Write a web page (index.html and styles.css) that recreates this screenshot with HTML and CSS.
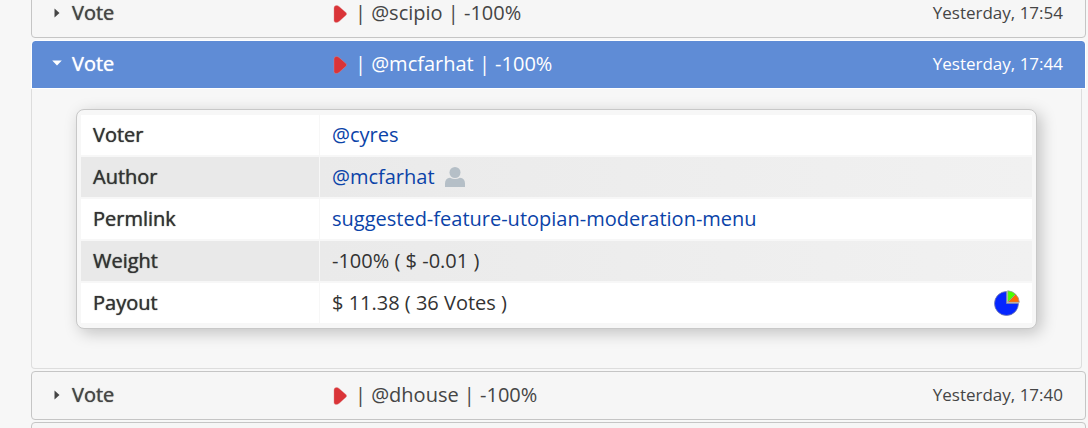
FILE: index.html
```html
<!DOCTYPE html>
<html lang="en">
<head>
<meta charset="utf-8">
<title>Votes</title>
<link rel="stylesheet" href="styles.css">
</head>
<body>
<svg class="defs" width="0" height="0" aria-hidden="true">
  <symbol id="flag" viewBox="0 0 14 18"><path d="M1 3Q1 .5 3.500 .5Q5 .5 6 1.400L13.200 7.800Q14 9 13.200 10L6 16.500Q4.500 17.500 3 17.500Q1 17.500 1 15.500Z" fill="#da3438" stroke="#e08a8c" stroke-width=".4"/></symbol>
  <symbol id="closed" viewBox="0 0 6 10"><path d="M.5.500 5.500 5 .5 9.500Z" fill="currentColor"/></symbol>
  <symbol id="open" viewBox="0 0 10 8"><path d="M.2.5H9.800L5 5.500Z" fill="currentColor"/></symbol>
</svg>
<main class="list">
  <button class="row" type="button" aria-expanded="false">
    <span class="marker"><svg width="6" height="10"><use href="#closed"/></svg></span>
    <span class="kind">Vote</span>
    <span class="summary"><svg class="flag" width="14" height="18"><use href="#flag"/></svg>| @scipio | -100%</span>
    <time class="time">Yesterday, 17:54</time>
  </button>
  <button class="row row-active" type="button" aria-expanded="true" aria-controls="details">
    <span class="marker"><svg width="10" height="8"><use href="#open"/></svg></span>
    <span class="kind">Vote</span>
    <span class="summary"><svg class="flag" width="14" height="18"><use href="#flag"/></svg>| @mcfarhat | -100%</span>
    <time class="time">Yesterday, 17:44</time>
  </button>
  <section class="panel" id="details">
    <div class="card">
      <table class="details">
        <tr><th scope="row">Voter</th><td><a href="#">@cyres</a></td></tr>
        <tr class="shade"><th scope="row">Author</th><td><div class="author"><a href="#">@mcfarhat</a><svg width="22" height="20" viewBox="0 0 22 20" aria-hidden="true"><ellipse cx="11" cy="5.500" rx="5.500" ry="5.500"/><path d="M1 20V16.500Q1 11.500 6 10.800Q11 13.200 16 10.800Q21 11.500 21 16.500V20Z"/></svg></div></td></tr>
        <tr><th scope="row">Permlink</th><td><a href="#">suggested-feature-utopian-moderation-menu</a></td></tr>
        <tr class="shade"><th scope="row">Weight</th><td>-100% ( $ -0.01 )</td></tr>
        <tr><th scope="row">Payout</th><td><div class="payout"><span>$ 11.38 ( 36 Votes )</span><svg width="26" height="26" viewBox="0 0 26 26" aria-hidden="true"><path d="M12.500 13.500V1.500A12 12 0 1 0 24.500 13.500Z" fill="#0526ff" stroke="#777fa8" stroke-width=".8"/><path d="M13.700 12.300V.8A12 12 0 0 1 21.700 4.300Z" fill="#4bff00" stroke="#999" stroke-width=".8"/><path d="M13.700 12.300 21.700 4.300A12 12 0 0 1 25.300 12.300Z" fill="#ff6a00" stroke="#999" stroke-width=".8"/></svg></div></td></tr>
      </table>
    </div>
  </section>
  <button class="row" type="button" aria-expanded="false">
    <span class="marker"><svg width="6" height="10"><use href="#closed"/></svg></span>
    <span class="kind">Vote</span>
    <span class="summary"><svg class="flag" width="14" height="18"><use href="#flag"/></svg>| @dhouse | -100%</span>
    <time class="time">Yesterday, 17:40</time>
  </button>
  <button class="row" type="button" aria-expanded="false" aria-label="Next vote"></button>
</main>
</body>
</html>
```
FILE: styles.css
```css
* { box-sizing: border-box; }
html { height: 100%; overflow: hidden; }
body {
  height: 100%;
  margin: 0;
  overflow: hidden;
  background: #f7f7f7;
  color: #333;
  font: 20px/28px "Open Sans", sans-serif;
}
.defs { position: absolute; }
.list {
  display: flex;
  flex-direction: column;
  gap: 2px;
  margin: -11px 2px 0 31px;
}
.row {
  display: flex;
  align-items: center;
  width: 100%;
  min-height: 49px;
  padding: 0 22px 2px 20px;
  border: 1px solid #c5c5c5;
  border-radius: 4px;
  background: #f6f6f6;
  color: #454545;
  font: inherit;
  text-align: left;
}
.row-active {
  border-color: #fff;
  border-radius: 4px 4px 0 0;
  background: #5f8cd6;
  background-clip: padding-box;
  color: #fff;
}
.marker {
  display: flex;
  justify-content: center;
  width: 10px;
  margin-right: 10px;
}
.row-active .marker { justify-content: flex-start; }
.kind {
  width: 260px;
  text-shadow: 0 0 1px currentColor;
}
.summary {
  display: flex;
  flex: 1;
  align-items: center;
}
.flag { margin: 2px 8px 0 1px; }
.time { font-size: 17px; }
.panel {
  margin: -2px 4px 0 0;
  padding: 20px 44px 39px;
  border: 1px solid #ddd;
  border-top: 0;
  border-radius: 0 0 4px 4px;
}
.card {
  padding: 3px;
  border: 1px solid #c8c8c8;
  border-radius: 8px;
  background: #f7f7f7;
  box-shadow: 4px 4px 16px rgba(0, 0, 0, .22);
}
.details {
  width: 100%;
  border-spacing: 1px 2px;
  table-layout: fixed;
}
.details th,
.details td {
  height: 40px;
  padding: 0 12px;
  background: #fff;
  text-align: left;
  font-weight: 400;
}
.details th {
  width: 238px;
  text-shadow: 0 0 1px currentColor;
}
.details .shade th { background: #e9e9e9; }
.details .shade td { background: linear-gradient(90deg, #eaeaea, #f1f1f1); }
.details a { color: #0b43a8; text-decoration: none; }
.author {
  display: flex;
  align-items: center;
  gap: 9px;
  fill: #b5bfc7;
}
.payout {
  display: flex;
  align-items: center;
  justify-content: space-between;
}
```
